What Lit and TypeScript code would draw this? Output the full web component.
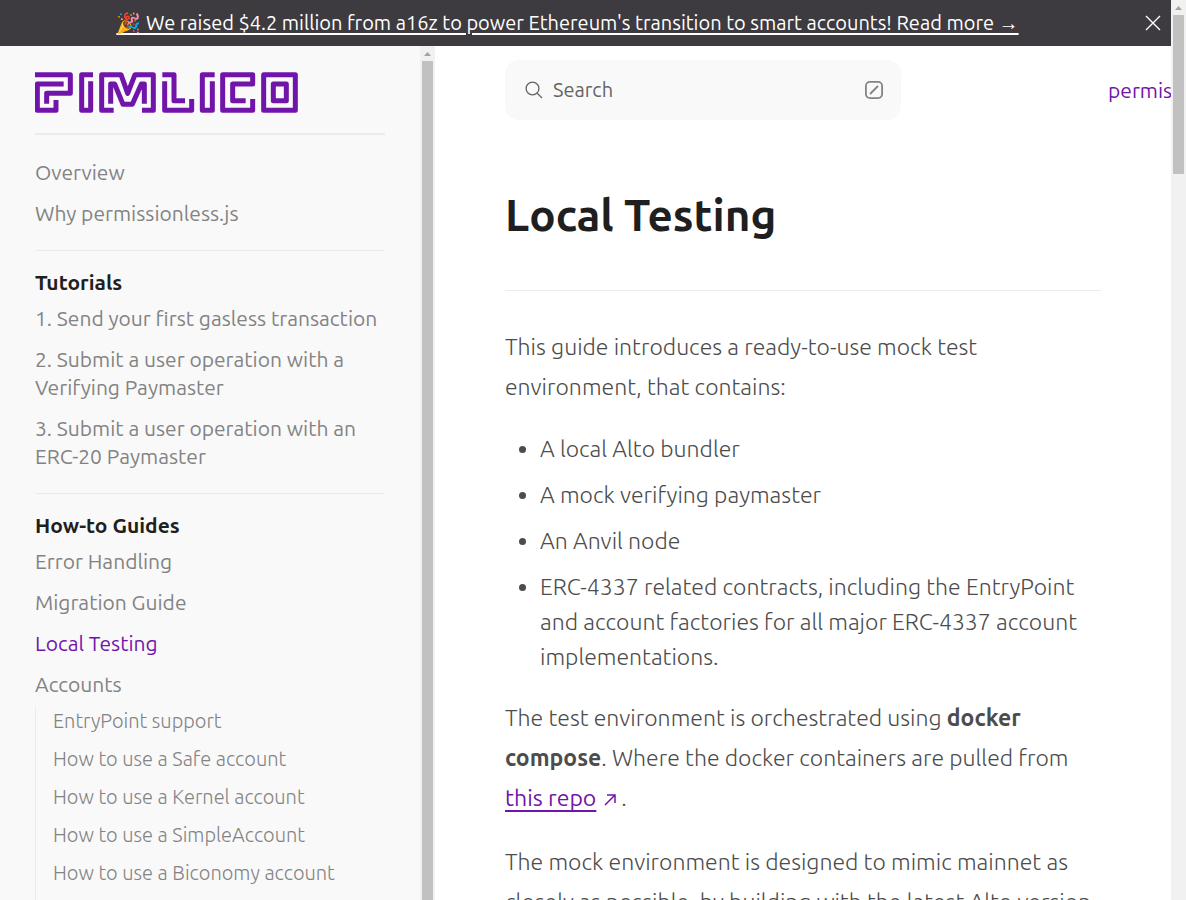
import { LitElement, html, css, svg } from "lit";
import { customElement } from "lit/decorators.js";

interface NavItem {
  label: string;
  active?: boolean;
  children?: string[];
}

interface NavSection {
  title?: string;
  items: NavItem[];
}

const sections: NavSection[] = [
  { items: [{ label: "Overview" }, { label: "Why permissionless.js" }] },
  {
    title: "Tutorials",
    items: [
      { label: "1. Send your first gasless transaction" },
      { label: "2. Submit a user operation with a Verifying Paymaster" },
      { label: "3. Submit a user operation with an ERC-20 Paymaster" },
    ],
  },
  {
    title: "How-to Guides",
    items: [
      { label: "Error Handling" },
      { label: "Migration Guide" },
      { label: "Local Testing", active: true },
      {
        label: "Accounts",
        children: [
          "EntryPoint support",
          "How to use a Safe account",
          "How to use a Kernel account",
          "How to use a SimpleAccount",
          "How to use a Biconomy account",
        ],
      },
    ],
  },
];

const fontStack = css`Ubuntu, "Noto Sans", "Open Sans", sans-serif`;

@customElement("scroll-track")
export class ScrollTrack extends LitElement {
  static styles = css`
    :host {
      display: flex;
      flex-direction: column;
      flex: none;
      width: 15px;
      background: #f1f1f1;
      box-sizing: border-box;
      padding: 0 2px;
    }
    .arrow {
      flex: none;
      height: 15px;
      display: block;
    }
    .thumb {
      background: #c1c1c1;
      height: var(--thumb, 100%);
    }
  `;
  render() {
    return html`<svg class="arrow" viewBox="0 0 11 15" aria-hidden="true">
        <path d="M2 10L5.500 6L9 10Z" fill="#a3a3a3" />
      </svg>
      <div class="thumb"></div>`;
  }
}

@customElement("top-banner")
export class TopBanner extends LitElement {
  static styles = css`
    :host {
      display: flex;
      align-items: center;
      height: 46px;
      background: #3d3a40;
      color: #fff;
      font: 20px/28px ${fontStack};
    }
    .message {
      flex: 1;
      text-align: center;
      white-space: nowrap;
    }
    .link {
      color: inherit;
      text-underline-offset: 3px;
      text-decoration-thickness: 2px;
    }
    .close {
      display: grid;
      place-items: center;
      width: 36px;
      height: 36px;
      padding: 0;
      border: 0;
      background: none;
      color: inherit;
    }
  `;
  render() {
    return html`<div class="message">
        <a class="link" href="#">🎉 We raised $4.2 million from a16z to power Ethereum's transition to smart accounts! Read more →</a>
      </div>
      <button class="close" aria-label="Dismiss">
        <svg width="16" height="16" viewBox="0 0 16 16" fill="none" stroke="currentColor" stroke-width="1.4">
          <path d="M1 1L15 15M15 1L1 15" />
        </svg>
      </button>`;
  }
}

@customElement("side-nav")
export class SideNav extends LitElement {
  static styles = css`
    :host {
      display: block;
      flex: 1;
      min-width: 0;
      padding: 0 35px;
      font: 21px/28px ${fontStack};
      color: #838383;
    }
    .brand {
      display: block;
      padding: 26px 0 20px;
      border-bottom: 2px solid #ebebeb;
    }
    .logo {
      display: block;
      width: 263px;
      height: 41px;
    }
    .section {
      padding: 17px 0 23px;
      border-bottom: 1px solid #ebebeb;
    }
    .section:first-of-type {
      padding-top: 23px;
    }
    .section:last-of-type {
      border: 0;
    }
    .title {
      margin: 0 0 8px;
      font-size: 21px;
      line-height: 28px;
      font-weight: 600;
      color: #1f1f1f;
    }
    .list {
      list-style: none;
      margin: 0;
      padding: 0;
      display: grid;
      gap: 13px;
    }
    .sub {
      list-style: none;
      margin: 9px 0 0;
      padding: 0 0 24px 17px;
      border-left: 1px solid #ebebeb;
      display: grid;
      gap: 10px;
      font-size: 20px;
      font-weight: 300;
    }
    .item {
      color: inherit;
      text-decoration: none;
    }
    .active {
      color: #7115aa;
    }
  `;
  logo() {
    return svg`<svg class="logo" viewBox="45 66 789 123" preserveAspectRatio="none" fill="none"
      stroke="#7115aa" stroke-width="15" stroke-linejoin="round" role="img" aria-label="Pimlico">
      <path d="M45 74H151V130H80V161M131 102H52V181H108V150" />
      <path d="M219 74H185V181H212V94" />
      <path d="M281 181H245V74H303L323 130L345 74H400V181H366M272 161V102H284L309 163H337L364 102H373V161" />
      <path d="M427 74H462V152H495M434 94V181H515V147" />
      <path d="M584 74H547V181H577V94" />
      <path d="M677 152H638V102H698V74H608V181H698V147" />
      <path d="M731 74H826V181H731ZM760 102H799V152H760Z" />
    </svg>`;
  }
  render() {
    return html`<a class="brand" href="#">${this.logo()}</a>
      ${sections.map(
        (s) => html`<section class="section">
          ${s.title ? html`<h2 class="title">${s.title}</h2>` : null}
          <ul class="list">
            ${s.items.map(
              (i) => html`<li>
                <a class="item ${i.active ? "active" : ""}" href="#">${i.label}</a>
                ${i.children
                  ? html`<ul class="sub">
                      ${i.children.map((c) => html`<li><a class="item" href="#">${c}</a></li>`)}
                    </ul>`
                  : null}
              </li>`
            )}
          </ul>
        </section>`
      )}`;
  }
}

@customElement("doc-page")
export class DocPage extends LitElement {
  static styles = css`
    :host {
      display: block;
      flex: 1;
      min-width: 0;
      overflow: hidden;
      padding: 14px 0 0 70px;
      font: 23px/40px ${fontStack};
      font-weight: 300;
      color: #4c4c4c;
      background: #fff;
    }
    .bar {
      display: flex;
      align-items: center;
      font-size: 20px;
      line-height: 28px;
      font-weight: 400;
    }
    .search {
      flex: none;
      box-sizing: border-box;
      display: flex;
      align-items: center;
      gap: 10px;
      width: 396px;
      height: 60px;
      padding: 0 17px 0 20px;
      border: 0;
      border-radius: 14px;
      background: #f9f9f9;
      color: #646464;
      font: inherit;
    }
    .label {
      flex: 1;
      text-align: left;
    }
    .top-link {
      margin-left: 207px;
      font-size: 21px;
      color: #7115aa;
      text-decoration: none;
      white-space: nowrap;
    }
    .article {
      margin-right: 70px;
    }
    .heading {
      margin: 0 0 36px;
      padding: 65px 0 45px;
      border-bottom: 1px solid #ebebeb;
      font-size: 44px;
      line-height: 60px;
      font-weight: 600;
      color: #1f1f1f;
    }
    .text {
      margin: 0 0 24px;
    }
    .bullets {
      margin: 0 0 24px;
      padding-left: 35px;
      display: grid;
      gap: 11px;
      line-height: 35px;
    }
    .strong {
      font-weight: 600;
    }
    .link {
      color: #7115aa;
      font-weight: 400;
      text-underline-offset: 4px;
      text-decoration-thickness: 2px;
    }
    .ext {
      margin: 0 5px 0 8px;
    }
  `;
  render() {
    return html`<header class="bar">
        <button class="search">
          <svg width="18" height="18" viewBox="0 0 18 18" fill="none" stroke="currentColor" stroke-width="1.3">
            <circle cx="7.500" cy="7.500" r="6.400" />
            <path d="M12 12L17 17" />
          </svg>
          <span class="label">Search</span>
          <svg width="20" height="20" viewBox="0 0 20 20" fill="none" stroke="#838383" stroke-width="1.800">
            <rect x="1.900" y="1.900" width="16.200" height="16.200" rx="4" />
            <path d="M6 14L14 6" />
          </svg>
        </button>
        <a class="top-link" href="#">permissionless.js</a>
      </header>
      <article class="article">
        <h1 class="heading">Local Testing</h1>
        <p class="text">This guide introduces a ready-to-use mock test environment, that contains:</p>
        <ul class="bullets">
          <li>A local Alto bundler</li>
          <li>A mock verifying paymaster</li>
          <li>An Anvil node</li>
          <li>ERC-4337 related contracts, including the EntryPoint and account factories for all major ERC-4337 account implementations.</li>
        </ul>
        <p class="text">The test environment is orchestrated using <strong class="strong">docker compose</strong>. Where the docker containers are pulled from <a class="link" href="#">this repo</a><svg class="ext" width="12" height="12" viewBox="0 0 12 12" fill="none" stroke="#7115aa" stroke-width="1.500"><path d="M1 11L11 1M3 1H11V9" /></svg>.</p>
        <p class="text">The mock environment is designed to mimic mainnet as closely as possible, by building with the latest Alto version.</p>
      </article>`;
  }
}

@customElement("app-root")
export class AppRoot extends LitElement {
  static styles = css`
    :host {
      display: flex;
      height: 100vh;
      overflow: hidden;
      background: #fff;
    }
    .page {
      flex: 1;
      min-width: 0;
      display: flex;
      flex-direction: column;
    }
    .body {
      flex: 1;
      min-height: 0;
      display: flex;
      overflow: hidden;
    }
    .sidebar {
      flex: none;
      display: flex;
      width: 435px;
      background: #f9f9f9;
      overflow: hidden;
    }
    .page-scroll {
      --thumb: 159px;
    }
  `;
  render() {
    return html`<div class="page">
        <top-banner></top-banner>
        <div class="body">
          <aside class="sidebar">
            <side-nav></side-nav>
            <scroll-track></scroll-track>
          </aside>
          <doc-page></doc-page>
        </div>
      </div>
      <scroll-track class="page-scroll"></scroll-track>`;
  }
}
